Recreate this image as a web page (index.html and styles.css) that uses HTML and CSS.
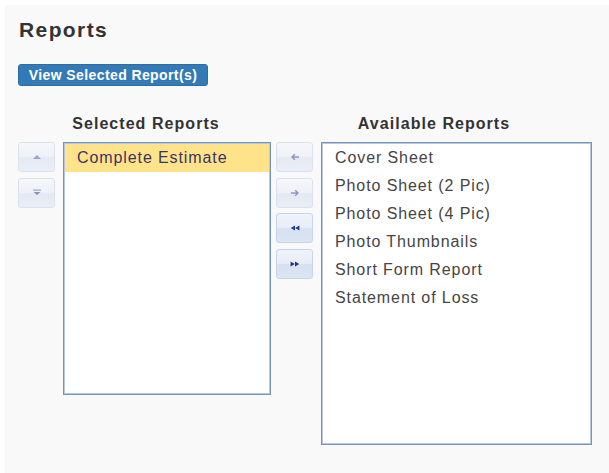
FILE: index.html
```html
<!DOCTYPE html>
<html lang="en">
<head>
<meta charset="utf-8">
<title>Reports</title>
<link rel="stylesheet" href="styles.css">
</head>
<body>
<div class="panel">
  <h1 class="title">Reports</h1>
  <button class="btn-primary" type="button">View Selected Report(s)</button>

  <div class="columns">
    <section class="column column-selected">
      <h2 class="column-head">Selected Reports</h2>
      <div class="column-body">
        <div class="tool-stack">
          <button class="tool" type="button" title="Move up">
            <svg width="10" height="6" viewBox="0 0 10 6"><path d="M1 5 L5 1 L9 5 Z" fill="#9aa7c4"/></svg>
          </button>
          <button class="tool" type="button" title="Move down">
            <svg width="10" height="7" viewBox="0 0 10 7"><rect x="1" y="0.5" width="8" height="1.2" fill="#9aa7c4"/><path d="M1.5 3 L8.5 3 L5 6 Z" fill="#8493b6"/></svg>
          </button>
        </div>
        <ul class="listbox listbox-short">
          <li class="item is-selected">Complete Estimate</li>
        </ul>
      </div>
    </section>

    <section class="column column-available">
      <h2 class="column-head">Available Reports</h2>
      <div class="column-body">
        <div class="tool-stack">
          <button class="tool" type="button" title="Add">
            <svg width="10" height="8" viewBox="0 0 10 8"><path d="M9 4 H2.5 M4.8 1.3 L2 4 L4.8 6.7" fill="none" stroke="#8b97bd" stroke-width="1.4"/></svg>
          </button>
          <button class="tool" type="button" title="Remove">
            <svg width="10" height="8" viewBox="0 0 10 8"><path d="M1 4 H7.5 M5.2 1.3 L8 4 L5.2 6.7" fill="none" stroke="#8b97bd" stroke-width="1.4"/></svg>
          </button>
          <button class="tool tool-active" type="button" title="Add all">
            <svg width="10" height="6" viewBox="0 0 10 6"><path d="M5 0.5 L0.8 3 L5 5.5 Z M9.4 0.5 L5.2 3 L9.4 5.5 Z" fill="#26378a"/></svg>
          </button>
          <button class="tool tool-active" type="button" title="Remove all">
            <svg width="10" height="6" viewBox="0 0 10 6"><path d="M0.6 0.5 L4.8 3 L0.6 5.5 Z M5 0.5 L9.2 3 L5 5.5 Z" fill="#2a2f7e"/></svg>
          </button>
        </div>
        <ul class="listbox listbox-tall">
          <li class="item">Cover Sheet</li>
          <li class="item">Photo Sheet (2 Pic)</li>
          <li class="item">Photo Sheet (4 Pic)</li>
          <li class="item">Photo Thumbnails</li>
          <li class="item">Short Form Report</li>
          <li class="item">Statement of Loss</li>
        </ul>
      </div>
    </section>
  </div>
</div>
</body>
</html>
```

FILE: styles.css
```css
html, body {
  margin: 0;
  padding: 0;
  background: #ffffff;
}

body {
  font-family: "Liberation Sans", Arial, Helvetica, sans-serif;
  color: #333333;
}

.panel {
  margin: 5px 0 0 5px;
  min-height: 468px;
  box-sizing: border-box;
  padding: 13px 0 0 13px;
  background: #f9f9f9;
}

.title {
  margin: 0;
  font-size: 21px;
  line-height: 24px;
  font-weight: bold;
  letter-spacing: 1.4px;
  color: #333333;
  padding-left: 1px;
}

.btn-primary {
  display: block;
  margin-top: 22px;
  height: 22px;
  width: 190px;
  padding: 0;
  border: 1px solid #2e6da4;
  border-radius: 3px;
  background: #337ab7;
  color: #ffffff;
  font-family: inherit;
  font-size: 14px;
  font-weight: bold;
  letter-spacing: 0.4px;
  line-height: 20px;
  text-align: center;
}

.columns {
  display: flex;
  align-items: flex-start;
  gap: 5px;
  margin-top: 29px;
}

.column-head {
  margin: 0 0 9px;
  font-size: 16px;
  line-height: 18px;
  font-weight: bold;
  letter-spacing: 1.05px;
  text-align: center;
  color: #333333;
}

.column-selected .column-head {
  padding-left: 3px;
}

.column-body {
  display: flex;
  align-items: flex-start;
  gap: 8px;
}

.tool-stack {
  display: flex;
  flex-direction: column;
  gap: 5.5px;
}

.tool {
  width: 37px;
  height: 30px;
  padding: 0;
  display: flex;
  align-items: center;
  justify-content: center;
  border: 1px solid #dce2ed;
  border-radius: 3px;
  background: linear-gradient(#f5f7fb 0%, #eef1f7 50%, #e4e9f3 52%, #e8edf6 100%);
}

.tool-active {
  border-color: #c8d4e8;
  background: linear-gradient(#eff3fa 0%, #e6ecf6 50%, #d6e1f1 52%, #dbe5f3 100%);
}

.tool svg {
  display: block;
}

.listbox {
  list-style: none;
  margin: 0;
  padding: 1px;
  box-sizing: border-box;
  background: #ffffff;
  border: 1px solid #7693bd;
  box-shadow: inset 1px 1px 0 #b7c7df, inset -1px -1px 0 #b7c7df;
}

.listbox-short {
  width: 208px;
  height: 253px;
}

.listbox-tall {
  width: 271px;
  height: 303px;
}

.item {
  height: 28px;
  line-height: 28px;
  padding-left: 12px;
  font-size: 16px;
  letter-spacing: 0.9px;
  color: #464444;
  white-space: nowrap;
}

.is-selected {
  background: #ffe38b;
  color: #3a3462;
}
```
